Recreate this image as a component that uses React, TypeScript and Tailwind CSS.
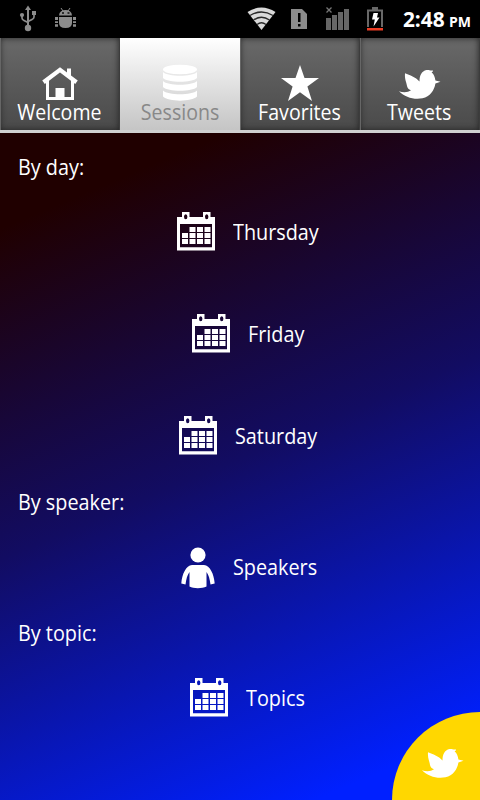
import type { ReactNode } from "react";

const BIRD =
  "M0 22.200C4 23.600 9 23.500 12 21.300C9.500 20.400 8.200 18.600 7.900 16.400C7.500 13 5.500 10.500 6 4.200C11 6 16.500 8 20.500 12.500C20.500 6.500 22.500 2 27.500 1C29.500 .700 31.500 1.700 32.900 1.500C33.800 1.300 34.300 1.500 34 2.200L32.600 3.600C34.700 5 36 8 36.400 11.500L41.500 12.700L36.400 14.400C35.500 21 31 27.500 23.500 29.300C14.500 31 6 28 0 22.200Z";

function Bird() {
  return (
    <svg width="42" height="31" viewBox="0 0 42 31" fill="#fff">
      <path d={BIRD} />
    </svg>
  );
}

function Home() {
  return (
    <svg width="36" height="34" viewBox="0 0 36 34">
      <path d="M5.500 14V31.500H30.500V14" fill="none" stroke="#fff" strokeWidth="3" />
      <path d="M1.500 15.200L18 2.800L34.500 15.200" fill="none" stroke="#fff" strokeWidth="4.200" />
      <path d="M25 1.500h4v8l-4-3zM13.500 21h9v11h-9z" fill="#fff" />
    </svg>
  );
}

function Discs() {
  return (
    <svg width="34" height="37" viewBox="0 0 34 37" fill="#fff">
      <ellipse cx="17" cy="5.500" rx="17" ry="4.800" />
      <path d="M0 8C5 13 29 13 34 8V14C29 19 5 19 0 14ZM0 17C5 22 29 22 34 17V23C29 28 5 28 0 23ZM0 26.500C5 31.500 29 31.500 34 26.500V32.500C29 38 5 38 0 32.500Z" />
    </svg>
  );
}

function Star() {
  return (
    <svg width="38" height="36" viewBox="0 0 38 36" fill="#fff">
      <path d="M19 0L23.500 13H38L26.400 21.500L31 36L19 27.300L7 36L11.600 21.500L0 13H14.500Z" />
    </svg>
  );
}

function Calendar() {
  return (
    <svg width="38" height="39" viewBox="0 0 38 39">
      <path
        fill="#fff"
        fillRule="evenodd"
        d="M0 5H5V0H12.500V5H26V0H33.500V5H38V38.500H0ZM3 12V35.300H35V12ZM7 4.700a1.700 2.500 0 1 0 3.400 0a1.700 2.500 0 1 0-3.400 0M28 4.700a1.700 2.500 0 1 0 3.400 0a1.700 2.500 0 1 0-3.400 0"
      />
      <path
        fill="#fff"
        d="M12.500 15h6v5h-6zM20 15h6v5h-6zM27.500 15h6v5h-6zM5 21h6v5H5zM12.500 21h6v5h-6zM20 21h6v5h-6zM27.500 21h6v5h-6zM5 27h6v5H5zM12.500 27h6v5h-6zM20 27h6v5h-6zM27.500 27h6v5h-6z"
      />
    </svg>
  );
}

function Person() {
  return (
    <svg className="mt-[3px]" width="34" height="42" viewBox="0 0 34 42" fill="#fff">
      <circle cx="17" cy="8" r="7.600" />
      <path d="M11 18H23C29 18.500 33 27 33.700 36.500L29.500 37.500C28.800 32 27.700 28 25.500 25V39.500C21 41.800 12.500 41.800 8.500 39.500V25C6.300 28 5.200 32 4.500 37.500L.300 36.500C1 27 5 18.500 11 18Z" />
    </svg>
  );
}

function StatusBar() {
  return (
    <header className="flex h-[38px] items-start bg-black">
      <svg width="400" height="38" viewBox="0 0 400 38">
        <g fill="#8c8c8c">
          <circle cx="28" cy="28" r="3.200" />
          <path d="M27 27V10h-2l3-4.500L31 10h-2v17zM32 11h4v4h-4z" />
          <circle cx="22" cy="15" r="2.100" />
          <path d="M22 15v3q0 1.500 2 2.500l4 2M34 14v3q0 1.500-2 2.500l-4 2" fill="none" stroke="#8c8c8c" strokeWidth="1.700" />
          <path d="M59 15.500Q59.500 10 65.500 10T72 15.500ZM59 17H72V23Q72 28 65.500 28T59 23ZM55 17h3v3h-3zM55 21.200h3v1.800h-3zM55 24.200h3v2.600h-3zM73 17h3v3h-3zM73 21.200h3v1.800h-3zM73 24.200h3v2.600h-3z" />
          <path d="M61 8l2 3M70 8l-2 3" stroke="#8c8c8c" />
          <path d="M291 9h11l5 5v15h-16z" />
        </g>
        <path d="M62 13h2M67.500 13h2" stroke="#111" strokeWidth="1.500" />
        <path d="M298 13h2.500v9H298zM298 24h2.500v2.500H298z" fill="#000" />
        <path d="M261.500 30L247.500 12Q261.500 3 275.500 12Z" fill="#d9d9d9" />
        <path d="M250 15.500Q261.500 8.500 273 15.500M253.500 20Q261.500 14.500 269.500 20M257 24.500Q261.500 21 266 24.500" fill="none" stroke="#282828" strokeWidth="1.300" />
        <path d="M326 18h5v12h-5zM332 15h5v15h-5zM338 12h5v18h-5zM344 9h5v21h-5z" fill="#666" />
        <path d="M326.500 7.500l5 5m0-5l-5 5" stroke="#777" strokeWidth="1.300" />
        <path d="M368 27V10.500h14V27" fill="none" stroke="#686868" strokeWidth="2" />
        <path d="M372 7h6v3h-6z" fill="#686868" />
        <path d="M373.500 13h4.500l-1 4.500h2.500l-6 9 1.300-7h-2.800z" fill="#fff" />
        <path d="M367 28h16v2.500h-16z" fill="#ed3d24" />
      </svg>
      <div className="flex items-baseline font-bold text-white">
        <span className="w-[41px] origin-left scale-x-[.97] pl-[3px] text-[21.500px] leading-[38px]">2:48</span>
        <span className="ml-[8px] text-[14px] leading-[38px]">PM</span>
      </div>
    </header>
  );
}

function Tab({ icon, label, active = false }: { icon: ReactNode; label: string; active?: boolean }) {
  return (
    <button
      className={
        "flex h-[92px] w-[120px] flex-col items-center text-[22px] " +
        (active
          ? "bg-linear-to-b from-white to-[#c5c5c5] text-[#888]"
          : "border-r border-r-[#3c3c3c] bg-linear-to-b from-[#696969] to-[#4a4a4a] text-white shadow-[inset_1px_0_0_#666,inset_0_0_6px_#222]")
      }
    >
      <span className="flex h-[63px] items-end">{icon}</span>
      <span className="-mt-px h-[28px] origin-center scale-x-[.89] leading-[23px] whitespace-nowrap">{label}</span>
    </button>
  );
}

function Label({ text }: { text: string }) {
  return (
    <h2 className="h-[29px] pl-[18px] leading-[29px]">
      <span className="inline-block origin-left scale-x-[.9]">{text}</span>
    </h2>
  );
}

function Row({ icon = <Calendar />, text, width }: { icon?: ReactNode; text: string; width: number }) {
  return (
    <div className="flex h-[102px] items-center justify-center gap-[18px] pb-[2px] pl-[15px]">
      {icon}
      <span className="whitespace-nowrap" style={{ width }}>
        <span className="inline-block origin-left scale-x-[.9]">{text}</span>
      </span>
    </div>
  );
}

export default function App() {
  return (
    <div className="flex h-[800px] w-[480px] flex-col overflow-hidden font-['Open_Sans','Noto_Sans',sans-serif]">
      <StatusBar />
      <nav className="flex h-[95px] border-b-[3px] border-[#d0d0d0]">
        <Tab icon={<Home />} label="Welcome" />
        <Tab icon={<Discs />} label="Sessions" active />
        <Tab icon={<Star />} label="Favorites" />
        <Tab icon={<span className="mb-px"><Bird /></span>} label="Tweets" />
      </nav>
      <main className="relative flex-1 bg-[linear-gradient(157deg,#200000_11%,#120c62_49%,#0020ff_92%)] pt-[19px] text-[22px] text-white">
        <Label text="By day:" />
        <Row text="Thursday" width={86} />
        <Row text="Friday" width={56} />
        <Row text="Saturday" width={82} />
        <Label text="By speaker:" />
        <Row icon={<Person />} text="Speakers" width={82} />
        <Label text="By topic:" />
        <Row text="Topics" width={60} />
        <button className="absolute right-0 bottom-0 h-[88px] w-[88px] rounded-tl-full bg-[#ffd700] pt-[14px] pl-[30px]">
          <Bird />
        </button>
      </main>
    </div>
  );
}
